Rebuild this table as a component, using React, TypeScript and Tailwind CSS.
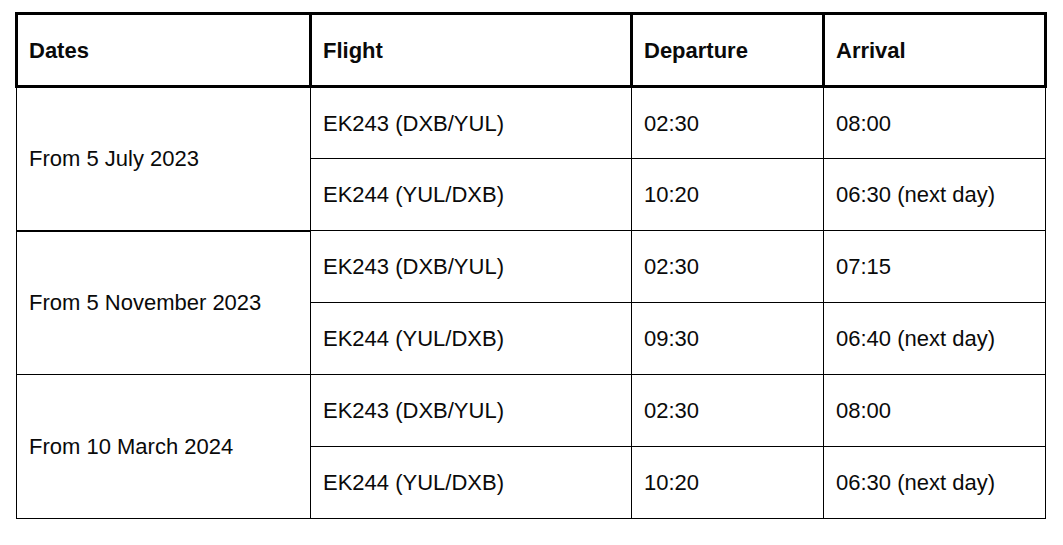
const groups = [
  {
    date: 'From 5 July 2023',
    rows: [
      ['EK243 (DXB/YUL)', '02:30', '08:00'],
      ['EK244 (YUL/DXB)', '10:20', '06:30 (next day)'],
    ],
    thick: true,
  },
  {
    date: 'From 5 November 2023',
    rows: [
      ['EK243 (DXB/YUL)', '02:30', '07:15'],
      ['EK244 (YUL/DXB)', '09:30', '06:40 (next day)'],
    ],
    thick: false,
  },
  {
    date: 'From 10 March 2024',
    rows: [
      ['EK243 (DXB/YUL)', '02:30', '08:00'],
      ['EK244 (YUL/DXB)', '10:20', '06:30 (next day)'],
    ],
    thick: false,
  },
];

export default function App() {
  return (
    <div className="w-[1063px] h-[545px] bg-white pl-[15px] pt-[12px] font-['Liberation_Sans',Arial,sans-serif] text-[22px] text-[#0a0a0a]">
      <table className="table-fixed border-collapse w-[1030px]">
        <colgroup>
          <col className="w-[294px]" />
          <col className="w-[321px]" />
          <col className="w-[192px]" />
          <col className="w-[222px]" />
        </colgroup>
        <thead>
          <tr className="h-[73px]">
            {['Dates', 'Flight', 'Departure', 'Arrival'].map((h) => (
              <th key={h} className="border-[3px] border-black text-left font-bold pl-[11px] align-middle p-0">
                {h}
              </th>
            ))}
          </tr>
        </thead>
        <tbody>
          {groups.map((g) =>
            g.rows.map((r, i) => (
              <tr key={g.date + i} className="h-[72px]">
                {i === 0 && (
                  <td
                    rowSpan={2}
                    className={`border border-black pl-[12px] align-middle p-0 ${g.thick ? 'border-b-2' : ''}`}
                  >
                    {g.date}
                  </td>
                )}
                {r.map((c, j) => (
                  <td key={j} className="border border-black pl-[12px] align-middle p-0">
                    {c}
                  </td>
                ))}
              </tr>
            ))
          )}
        </tbody>
      </table>
    </div>
  );
}
